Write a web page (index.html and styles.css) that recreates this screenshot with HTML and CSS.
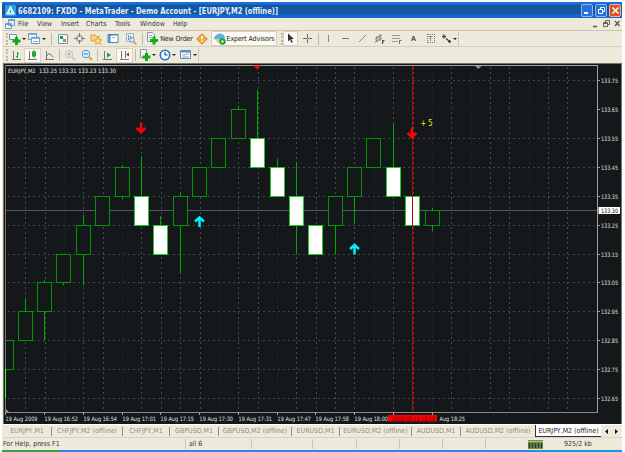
FILE: index.html
```html
<!DOCTYPE html>
<html lang="en">

<head>
    <meta charset="UTF-8">
    <meta name="viewport" content="width=device-width, initial-scale=1.0">
    <link rel="stylesheet" href="styles.css">
    <title>MetaTrader</title>
</head>

<body>

    <div class="window">
        <header class="title_bar">
            <svg class="logo" width="11" height="11" viewBox="0 0 11 11"><rect width="11" height="11" rx="1" fill="#2d9be0"/><path d="M5.500 1.500L9.500 9H1.500Z" fill="#bfe8fb" stroke="#fff"/><path d="M5.500 5v3" stroke="#3d9ad8"/></svg>
            <svg class="title_text" width="270" height="16"><text x="0" y="12" textLength="260" lengthAdjust="spacingAndGlyphs">6682109: FXDD - MetaTrader - Demo Account - [EURJPY,M2 (offline)]</text></svg>
            <div class="title_buttons">
                <span class="win_btn"><svg width="11" height="11"><path d="M2 8h4" stroke="#fff" stroke-width="2"/></svg></span>
                <span class="win_btn"><svg width="11" height="11"><path d="M4.500 4V2.500h4v4H7M2.500 4.500h4v4h-4z" fill="none" stroke="#fff"/></svg></span>
                <span class="win_btn win_close"><svg width="11" height="11"><path d="M2.500 2.500l6 6M8.500 2.500l-6 6" stroke="#fff" stroke-width="1.500"/></svg></span>
            </div>
        </header>

        <nav class="menu">
            <svg class="menu_icon" width="11" height="11"><path d="M3.500 .5h6v6h-6zM.5 4.500h6v5h-6z" fill="#e6f1fa" stroke="#6e9dc8"/><path d="M1 5.500h5M4 1.500h5" stroke="#6e9dc8"/></svg>
            <span class="m_file">File</span>
            <span class="m_view">View</span>
            <span class="m_insert">Insert</span>
            <span class="m_charts">Charts</span>
            <span class="m_tools">Tools</span>
            <span class="m_window">Window</span>
            <span class="m_help">Help</span>
            <svg class="menu_buttons" width="32" height="10"><path d="M3 7.500h4" stroke="#555" stroke-width="1.500"/><path d="M15.500 3V1.500h4v4H18M13.500 3.500h4v4h-4zM13.500 4.500h4" fill="none" stroke="#666"/><path d="M25 2l4.500 5M29.500 2l-4.500 5" stroke="#555" stroke-width="1.300"/></svg>
        </nav>

        <div class="toolbar">
            <i class="grip"></i>
            <span class="tool drop w18"><svg width="12" height="12"><path d="M.5 1.500h7v5h-7z" fill="#eef6fb" stroke="#7294ae"/><path d="M7.500 4v8M3.500 8h8" stroke="#12a91c" stroke-width="3"/></svg></span>
            <span class="tool drop w22"><svg width="13" height="12"><path d="M.5 .5h8v6h-8z" fill="#e8f2fb" stroke="#6d9cc4"/><path d="M3.500 4.500h8v6h-8z" fill="#fff" stroke="#6d9cc4"/><path d="M1 1.500h7M4 5.500h7M5 8.500h5" stroke="#8fb6d9"/></svg></span>
            <i class="sep w6"></i>
            <span class="tool"><svg width="12" height="12"><path d="M1.500 1.500h9v9h-9z" fill="#f6fbff" stroke="#6a9bbd"/><path d="M3 3h3v3H3z" fill="#14a328"/><path d="M6 6h3v3H6z" fill="#e2742c"/></svg></span>
            <span class="tool w16"><svg width="11" height="11"><circle cx="5.500" cy="5.500" r="3" fill="none" stroke="#777"/><path d="M5.500 0v4M5.500 7v4M0 5.500h4M7 5.500h4" stroke="#777"/></svg></span>
            <span class="tool"><svg width="12" height="12"><path d="M1 2h4l1 1.500h3V8H1z" fill="#fbd37c" stroke="#dca23c"/><path d="M8 4l1.200 2.600 2.600.3-2 1.800.6 2.700L8 10l-2.400 1.400.6-2.700-2-1.800 2.600-.3z" fill="#fde08a" stroke="#de8e28" stroke-width=".8"/></svg></span>
            <span class="tool w18"><svg width="12" height="12"><path d="M1 1.500h10v8H1z" fill="#fff" stroke="#4b85bd"/><path d="M1.500 2h2v7h-2z" fill="#4b85bd"/><path d="M1 2h10" stroke="#4b85bd"/><path d="M5 4.500h3" stroke="#aaa"/></svg></span>
            <span class="tool"><svg width="12" height="12"><path d="M1.500 .5h7v8h-7z" fill="#e8f1f7" stroke="#9eb4c4"/><path d="M3.500 2v5M5.500 3v4" stroke="#6d94b4"/><circle cx="7" cy="7" r="2.300" fill="#d7edf9" stroke="#7797ad"/><path d="M9 9l2.500 2.500" stroke="#d49537" stroke-width="1.500"/></svg></span>
            <i class="sep w6"></i>
            <span class="tool new_order"><svg width="13" height="13"><path d="M1.500 .5h5l2 2v7h-7z" fill="#f5f9fb" stroke="#8799a5"/><path d="M3 3.500h3M3 5.500h3" stroke="#9aa"/><path d="M8 4.500v8M4 8.500h8" stroke="#12a91c" stroke-width="3"/></svg><b>New Order</b></span>
            <span class="tool w16"><svg width="12" height="12"><path d="M6 .7L11.300 6 6 11.300.7 6z" fill="#f3a43c" stroke="#d98122"/><path d="M6 3v3.500M6 7.500v1.500" stroke="#fff" stroke-width="1.500"/></svg></span>
            <span class="tool pressed experts"><svg width="12" height="12"><path d="M0 6c0-3 3-5.500 6-5.500S11 3 11 5c-3 1.500-7 2-11 1z" fill="#5fb2e0"/><path d="M2 6h7c0 3-2 4-4 4s-3-2-3-4z" fill="#f1c878"/><circle cx="8.500" cy="8.500" r="3.200" fill="#17a525"/><path d="M7.600 6.800v3.400l2.600-1.700z" fill="#fff"/></svg><b>Expert Advisors</b></span>
            <i class="grip w6"></i>
            <span class="tool pressed w15"><svg width="9" height="11"><path d="M2 .5v8l2-2 1.500 3.500 1.300-.7L5.300 6H8z" fill="#333"/></svg></span>
            <span class="tool w18"><svg width="11" height="11"><path d="M5.500 1v4M5.500 6v4M1 5.500h4M6 5.500h4" stroke="#666"/></svg></span>
            <i class="sep w4"></i>
            <span class="tool"><svg width="11" height="11"><path d="M5.500 2v7" stroke="#888"/></svg></span>
            <span class="tool"><svg width="11" height="11"><path d="M2 5.500h7" stroke="#777"/></svg></span>
            <span class="tool"><svg width="11" height="11"><path d="M2 9L9 2" stroke="#888"/></svg></span>
            <span class="tool"><svg width="11" height="11"><path d="M1 6l7-4M1 9l7-4M3 9V3M6 8V1" stroke="#777"/><path d="M8.500 7v4M8 7.500h2.500M8 9h2" stroke="#555"/></svg></span>
            <span class="tool"><svg width="11" height="11"><path d="M1 2.500h8M1 5.500h8M1 8.500h6" stroke="#999"/><path d="M8.500 7v4M8 7.500h2.500" stroke="#777"/></svg></span>
            <span class="tool letter">A</span>
            <span class="tool letter boxed"><b>T</b></span>
            <span class="tool drop w19"><svg width="11" height="11"><path d="M1 3.500h4M3 1.500v4M5 5.500l3 2.500M7 8.500h3M8.500 7v3" stroke="#444" fill="none" stroke-width="1.300"/></svg></span>
            <i class="bar_end"></i>
        </div>

        <div class="toolbar second">
            <i class="grip"></i>
            <span class="tool w16"><svg width="11" height="11"><path d="M2.500 1v9M1 9.500h9" stroke="#777"/><path d="M6.500 2v6M5 6.500h1.500M6.500 3.500H8" stroke="#2c9b38"/></svg></span>
            <span class="tool pressed"><svg width="11" height="11"><path d="M2.500 1v9M1 9.500h9" stroke="#777"/><path d="M7 0v8" stroke="#128a22"/><path d="M5 1.500h4v5H5z" fill="#23a835"/></svg></span>
            <span class="tool w16"><svg width="11" height="11"><path d="M2.500 1v9M1 9.500h9" stroke="#777"/><path d="M3 6c1-3 3-3 6 1" fill="none" stroke="#2c9b38"/></svg></span>
            <i class="sep w4"></i>
            <span class="tool"><svg width="12" height="12"><circle cx="5" cy="5" r="3.500" fill="#eee" stroke="#bbb"/><path d="M8 8l3 3" stroke="#bbb" stroke-width="1.500"/><path d="M3 5h4M5 3v4" stroke="#aaa"/></svg></span>
            <span class="tool"><svg width="12" height="12"><circle cx="5" cy="5" r="3.700" fill="#dff0fc" stroke="#4a94d0"/><path d="M8 8l3 3" stroke="#d89b38" stroke-width="1.800"/><path d="M3 5h4" stroke="#2f74b4"/></svg></span>
            <i class="sep w4"></i>
            <span class="tool"><svg width="11" height="11"><path d="M2.500 1v9M1 9.500h9" stroke="#777"/><path d="M5 2.500v5l4-2.500z" fill="#1a9a2a"/></svg></span>
            <span class="tool pressed"><svg width="11" height="11"><path d="M2.500 1v9M1 9.500h9M6.500 1v7" stroke="#777"/><path d="M10 2.500v4L7 4.500z" fill="#c22"/></svg></span>
            <i class="sep w4"></i>
            <span class="tool drop w20"><svg width="12" height="12"><path d="M1.500 .5h6v8h-6z" fill="#f5f9fb" stroke="#8799a5"/><path d="M7.500 4v8M3.500 8h8" stroke="#12a91c" stroke-width="3"/></svg></span>
            <span class="tool drop w21"><svg width="12" height="12"><circle cx="6" cy="6" r="4.700" fill="#f4faff" stroke="#2675c4" stroke-width="1.600"/><path d="M6 3v3h2.500" fill="none" stroke="#333"/></svg></span>
            <span class="tool drop w20"><svg width="12" height="12"><path d="M.5 1.500h10v8H.5z" fill="#fff" stroke="#5b8fc0"/><path d="M1 2.500h9" stroke="#5b8fc0" stroke-width="2"/><path d="M2 6h3l1-1h3M2 8h7" stroke="#999" fill="none"/></svg></span>
            <i class="bar_end"></i>
        </div>

        <main class="chart">
            <svg id="chart" width="619" height="361" viewBox="3 63 619 361"></svg>
        </main>

        <div class="tabs">
            <span class="tab t1">EURJPY,M1</span>
            <span class="tab t2">CHFJPY,M2 (offline)</span>
            <span class="tab t3">CHFJPY,M1</span>
            <span class="tab t4">GBPUSD,M1</span>
            <span class="tab t5">GBPUSD,M2 (offline)</span>
            <span class="tab t6">EURUSD,M1</span>
            <span class="tab t7">EURUSD,M2 (offline)</span>
            <span class="tab t8">AUDUSD,M1</span>
            <span class="tab t9">AUDUSD,M2 (offline)</span>
            <span class="tab active">EURJPY,M2 (offline)</span>
            <svg width="20" height="11"><path d="M7 3v5L4 5.500zM14 3v5l3-2.500z" fill="#111"/></svg>
        </div>

        <footer class="status">
            <span class="s_help">For Help, press F1</span>
            <span class="s_profile">all 6</span>
            <span class="s_cell s_a"></span>
            <span class="s_cell s_b"></span>
            <span class="s_cell s_c"></span>
            <span class="s_cell s_c"></span>
            <span class="s_cell s_c"></span>
            <span class="s_cell s_d"></span>
            <svg width="15" height="9"><rect width="15" height="9" fill="#76933c"/><path d="M1.500 3v5M4.500 3v5M7.500 3v5M10.500 3v5M13.500 3v5" stroke="#1b3c4a" stroke-width="1.500"/><path d="M0 1.500h15" stroke="#a7bd72"/></svg>
            <span class="s_traffic">925/2 kb</span>
        </footer>
    </div>
    <div class="taskbar"></div>

    <script src="chart.js"></script>
</body>

</html>
```

FILE: styles.css
```css
* {
    margin: 0px;
    padding: 0px;
    box-sizing: border-box;
}

body {
    width: 625px;
    height: 452px;
    overflow: hidden;
    background: #ffffff;
    font-family: "DejaVu Sans Condensed", "DejaVu Sans", sans-serif;
    font-size: 7px;
    color: #333333;
    padding-top: 2px;
}

svg {
    display: block;
    flex-shrink: 0;
}

.window {
    width: 620px;
    height: 448px;
    margin-left: 2px;
    padding-left: 1px;
    background: #eeeadb;
}

.title_bar {
    height: 16px;
    margin-left: -1px;
    display: flex;
    align-items: center;
    background: linear-gradient(#1a6fe0 0px, #1a6fe0 2px, #1257a4 3px, #1257a4 12px, #1468cf 13px, #1468cf 16px);
    padding-left: 3px;
}

.title_text {
    margin-left: 2px;
    overflow: visible;
}

.title_text text {
    font-family: "DejaVu Sans Condensed", "DejaVu Sans", sans-serif;
    font-size: 9px;
    font-weight: 700;
    fill: #e4eefb;
}

.title_buttons {
    display: flex;
    gap: 2px;
    margin-left: auto;
    margin-right: 1px;
}

.win_btn {
    width: 12px;
    height: 13px;
    display: flex;
    align-items: center;
    justify-content: center;
    background: #2a70d8;
    border: 1px solid #8db8f0;
    border-radius: 2px;
}

.win_close {
    background: #dc5227;
    border-color: #f0b49a;
}

.menu {
    height: 13px;
    display: flex;
    align-items: center;
    border-bottom: 1px solid #c9c5b2;
    padding-left: 2px;
}

.menu_icon {
    width: 13px;
}

.m_file {
    width: 19px;
}

.m_view {
    width: 24px;
}

.m_insert {
    width: 25px;
}

.m_charts {
    width: 29px;
}

.m_tools {
    width: 25px;
}

.m_window {
    width: 33px;
}

.menu_buttons {
    margin-left: auto;
}

.toolbar {
    height: 16px;
    display: flex;
    align-items: center;
    border-bottom: 1px solid #d2cebc;
}

.second {
    border-bottom: 0px;
}

.grip {
    width: 5px;
    height: 12px;
    flex-shrink: 0;
    border-right: 2px dotted #bdb9a6;
    border-left: 2px solid transparent;
}

.tool {
    width: 17px;
    height: 15px;
    flex-shrink: 0;
    display: flex;
    align-items: center;
    justify-content: center;
}

.tool b {
    font-weight: 400;
    white-space: nowrap;
}

.pressed {
    background: #faf9f4;
    border: 1px solid #d5d1c0;
}

.drop::after {
    content: "";
    margin-left: 1px;
    border: 2px solid transparent;
    border-top-color: #222222;
    border-bottom: 0px;
}

.sep {
    height: 12px;
    flex-shrink: 0;
    background: linear-gradient(#bdb9a6, #bdb9a6) center / 1px 100% no-repeat;
}

.bar_end {
    height: 14px;
    border-left: 1px solid #cdc9b6;
}

.w4 {
    width: 4px;
}

.w6 {
    width: 6px;
}

.w15 {
    width: 15px;
}

.w16 {
    width: 16px;
}

.w18 {
    width: 18px;
}

.w19 {
    width: 19px;
}

.w20 {
    width: 20px;
}

.w21 {
    width: 21px;
}

.w22 {
    width: 22px;
}

.new_order {
    width: 49px;
    gap: 1px;
}

.experts {
    width: 66px;
    gap: 1px;
    margin-left: 1px;
}

.experts b,
.new_order b {
    letter-spacing: -0.1px;
    color: #222222;
}

.letter {
    font-weight: 700;
    color: #555555;
}

.boxed b {
    width: 8px;
    height: 9px;
    line-height: 8px;
    text-align: center;
    border: 1px dotted #777777;
}

.chart {
    width: 619px;
    height: 361px;
    background: #14181a;
}

.chart text {
    font-family: "DejaVu Sans Condensed", "DejaVu Sans", sans-serif;
    font-size: 6px;
    fill: #e0e0e0;
}

.chart .note {
    font-size: 8px;
    fill: #f0f000;
}

.chart .price_now {
    fill: #111111;
}

.chart .date_now {
    fill: #6e0000;
}

.tabs {
    height: 14px;
    display: flex;
    align-items: center;
    border-top: 1px solid #ffffff;
    border-bottom: 1px solid #d8d4c2;
    color: #8f8c80;
}

.tab {
    height: 9px;
    line-height: 8px;
    flex-shrink: 0;
    text-align: center;
    white-space: nowrap;
    border-right: 1px solid #8f8c80;
}

.t1 {
    width: 49px;
}

.t2 {
    width: 71px;
}

.t3 {
    width: 47px;
}

.t4 {
    width: 49px;
}

.t5 {
    width: 73px;
}

.t6 {
    width: 48px;
}

.t7 {
    width: 72px;
}

.t8 {
    width: 49px;
}

.t9 {
    width: 74px;
    border-right: 0px;
}

.active {
    width: 66px;
    height: 12px;
    line-height: 12px;
    align-self: flex-start;
    background: #ffffff;
    color: #222222;
    border-left: 1px solid #333333;
    border-bottom: 1px solid #333333;
    border-right: 0px;
}

.status {
    height: 12px;
    display: flex;
    align-items: center;
}

.s_help {
    width: 183px;
    height: 10px;
    line-height: 10px;
    border-right: 1px solid #cbc7b4;
}

.s_profile {
    width: 66px;
    height: 10px;
    line-height: 10px;
    padding-left: 3px;
    border-right: 1px solid #cbc7b4;
}

.s_cell {
    height: 10px;
    border-right: 1px solid #cbc7b4;
}

.s_a {
    width: 61px;
}

.s_b {
    width: 44px;
}

.s_c {
    width: 43px;
}

.s_d {
    width: 42px;
    border-right: 0px;
}

.s_traffic {
    margin-left: 21px;
}

.taskbar {
    height: 2px;
    width: 620px;
    margin-left: 2px;
    background: linear-gradient(90deg, #3f9c46 57px, #3c7fe4 57px, #3c7fe4 531px, #1796e2 531px);
}
```

FILE: chart.js
```js
let chart = document.querySelector('#chart')
let out = ''

let line = (x1, y1, x2, y2, color, extra = '') => {
    out += `<path d="M${x1} ${y1}L${x2} ${y2}" stroke="${color}" ${extra}/>`
}
let rect = (x, y, w, h, fill, stroke = 'none') => {
    out += `<rect x="${x}" y="${y}" width="${w}" height="${h}" fill="${fill}" stroke="${stroke}"/>`
}
let text = (x, y, w, str, cls = '') => {
    out += `<text x="${x}" y="${y}" class="${cls}" textLength="${w}" lengthAdjust="spacingAndGlyphs">${str}</text>`
}

// price levels, 133.75 down to 132.65
let levels = [80.5, 109.5, 138.5, 167.5, 196.5, 225.5, 254.5, 282.5, 311.5, 340.5, 369.5, 398.5]
let frame = '#a8a296'

// window edge and plot frame
line(3, 63.5, 622, 63.5, '#77746a')
line(3.5, 63, 3.5, 424, '#77746a')
line(621.5, 64, 621.5, 424, '#77746a')
line(5, 65.5, 598, 65.5, frame)
line(5.5, 65, 5.5, 413, '#77777c')
line(597.5, 65, 597.5, 413, frame)
line(5, 412.5, 598, 412.5, '#8c8a84')

// grid
let faint = [63, 122, 218, 277, 373, 432, 470, 529]
for (let i = 0; i < 29; i++) {
    let x = Math.round(25.3 + i * 19.36)
    let color = faint.some(f => Math.abs(f - x) < 2) ? '#22292d' : '#424d54'
    line(x + 0.5, 67, x + 0.5, 412, color, 'stroke-dasharray="2 3"')
}
levels.forEach((y, i) => {
    line(8, y, 597, y, i === 1 ? '#1d2326' : '#3b454b', 'stroke-dasharray="2 3"')
    line(597, y, 600, y, frame)
    text(601, y + 2, 17, (133.75 - i * 0.1).toFixed(2))
})
line(6, 210.5, 597, 210.5, '#4a5868')

// [center, top, bottom, high, low, filled]
let candles = [
    [25, 311.5, 340.5, 299, 340, 0],
    [44, 282.5, 311.5, 280, 340, 0],
    [63, 254.5, 282.5, 254, 285, 0],
    [83, 225.5, 254.5, 215, 285, 0],
    [102, 196.5, 225.5, 196, 225, 0],
    [122, 167.5, 196.5, 165, 199, 0],
    [141, 196.5, 225.5, 156, 225, 1],
    [160, 225.5, 254.5, 216, 254, 1],
    [180, 196.5, 225.5, 193, 273, 0],
    [199, 167.5, 196.5, 167, 196, 0],
    [218, 138.5, 167.5, 138, 167, 0],
    [238, 109.5, 138.5, 106, 138, 0],
    [257, 138.5, 167.5, 90, 167, 1],
    [277, 167.5, 196.5, 159, 196, 1],
    [296, 196.5, 225.5, 162, 254, 1],
    [315, 225.5, 254.5, 225, 254, 1],
    [335, 196.5, 225.5, 196, 254, 0],
    [354, 167.5, 196.5, 167, 223, 0],
    [373, 138.5, 167.5, 138, 167, 0],
    [393, 167.5, 196.5, 124, 196, 1],
    [412, 196.5, 225.5, 196, 225, 1],
    [432, 210.5, 225.5, 208, 231, 0]
]
for (let [x, top, bottom, high, low, filled] of candles) {
    line(x + 0.5, high, x + 0.5, top, '#00a800')
    line(x + 0.5, bottom, x + 0.5, low + 0.5, '#00a800')
    rect(x - 6.5, top, 14, bottom - top, filled ? '#ffffff' : '#14181a', filled ? '#22c822' : '#009800')
}
out += '<path d="M5 340.5H13.500V369.5H5" fill="none" stroke="#009800"/>'
line(5.5, 369, 5.5, 398, '#50f050')

// cursor line, signals and markers
line(412.5, 66, 412.5, 412, '#c40000')
let arrow = (x, y, color, flip) => {
    out += `<path d="M0 -5V5M-4.500 .5L0 4.500L4.500 .5" transform="translate(${x} ${y}) scale(1 ${flip})" fill="none" stroke="${color}" stroke-width="2.500"/>`
}
arrow(141, 127.5, '#ff0000', 1)
arrow(412, 132.5, '#ff0000', 1)
arrow(199.5, 222, '#00f0ff', -1)
arrow(354.5, 249.5, '#00f0ff', -1)
out += '<path d="M253.500 65.500h7l-3.500 4z" fill="#ff0000"/>'
out += '<path d="M475 66h6.500l-3.200 3z" fill="#8295b5"/>'
out += '<path d="M6 409v3h3z" fill="#8295b5"/>'
text(420.5, 125.5, 12, '+ 5', 'note')
text(8, 73, 108, 'EURJPY,M2&#160; 133.25 133.31 133.23 133.30')

rect(598.5, 207, 21.5, 7, '#ffffff')
text(601, 212.5, 17, '133.30', 'price_now')

// time scale
let dates = ['19 Aug 2009', '19 Aug 16:52', '19 Aug 16:54', '19 Aug 17:01', '19 Aug 17:15', '19 Aug 17:30', '19 Aug 17:31', '19 Aug 17:47', '19 Aug 17:58', '19 Aug 18:00']
let starts = [5, 44, 83, 122, 160, 199, 238, 277, 315, 354]
dates.forEach((d, i) => {
    line(starts[i] + 0.5, 412, starts[i] + 0.5, 415, frame)
    text(starts[i] + 0.5, 420.5, i === 0 ? 32 : 33.5, d)
})
line(393.5, 412, 393.5, 415, frame)
line(432.5, 412, 432.5, 415, frame)
rect(388, 415, 49, 6.5, '#ff0000')
text(392, 420.5, 43, '2009.08.19 18:18', 'date_now')
text(439.5, 420.5, 25.5, 'Aug 18:25')

chart.innerHTML = out
```
